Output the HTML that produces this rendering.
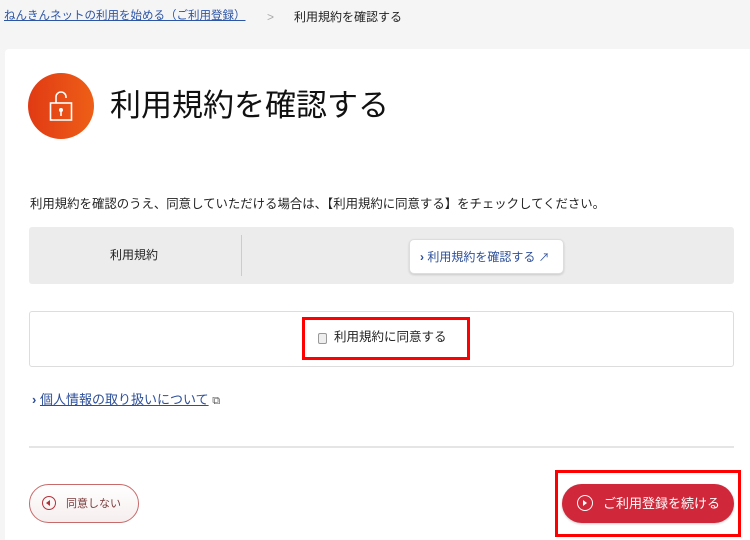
<!DOCTYPE html>
<html><head><meta charset="utf-8"><style>
*{margin:0;padding:0;box-sizing:border-box}
body{width:750px;height:540px;background:#f5f5f5;font-family:"Liberation Sans","Noto Sans CJK JP",sans-serif;position:relative;overflow:hidden;color:#222}
.a{position:absolute;line-height:1.2}
</style></head><body>
<div class="a" style="left:4px;top:10px;font-size:11.5px;color:#2d55a6;text-decoration:underline">ねんきんネットの利用を始める（ご利用登録）</div>
<div class="a" style="left:267px;top:10px;font-size:12px;color:#aaa">&gt;</div>
<div class="a" style="left:294px;top:10px;font-size:12px;color:#222">利用規約を確認する</div>
<div class="a" style="left:5px;top:49px;width:745px;height:491px;background:#fff;border-radius:4px 0 0 0"></div>
<div class="a" style="left:28px;top:73px;width:66px;height:66px;border-radius:50%;background:linear-gradient(90deg,#e13a14,#ee5f17)"></div>
<svg class="a" style="left:48px;top:88px" width="26" height="34" viewBox="0 0 26 34"><path d="M8 15V9a5 5 0 0 1 10 0v1" fill="none" stroke="#fff" stroke-width="1.6"/><rect x="2.5" y="15" width="21" height="17" fill="none" stroke="#fff" stroke-width="1.6"/><circle cx="13" cy="22" r="2" fill="#fff"/><path d="M13 23v5" stroke="#fff" stroke-width="1.6"/></svg>
<div class="a" style="left:110px;top:87px;font-size:31px;color:#111">利用規約を確認する</div>
<div class="a" style="left:30px;top:197px;font-size:12.4px">利用規約を確認のうえ、同意していただける場合は、【利用規約に同意する】をチェックしてください。</div>
<div class="a" style="left:29px;top:227px;width:705px;height:57px;background:#ececec;border-radius:3px"></div>
<div class="a" style="left:110px;top:248px;font-size:12px">利用規約</div>
<div class="a" style="left:241px;top:235px;width:1px;height:41px;background:#ccc"></div>
<div class="a" style="left:409px;top:239px;width:155px;height:35px;background:#fff;border:1px solid #ddd;border-radius:5px;box-shadow:0 1px 2px rgba(0,0,0,.15);font-size:12px;color:#2d4f9a;padding:10px 0 0 10px;line-height:1.2"><b style="color:#2d4f9a">›</b>&nbsp;利用規約を確認する <span style="font-size:11px">↗</span></div>
<div class="a" style="left:29px;top:311px;width:705px;height:56px;border:1px solid #ddd;border-radius:3px"></div>
<div class="a" style="left:302px;top:317px;width:168px;height:43px;border:3px solid #f00"></div>
<div class="a" style="left:318px;top:333px;width:9px;height:11px;border:1px solid #999;border-radius:2px;background:#eee"></div>
<div class="a" style="left:334px;top:330px;font-size:12.5px">利用規約に同意する</div>
<div class="a" style="left:32px;top:392px;font-size:13px;color:#2d4f9a"><b>›</b> <span style="text-decoration:underline">個人情報の取り扱いについて</span> <span style="font-size:11px;color:#555">⧉</span></div>
<div class="a" style="left:29px;top:446px;width:705px;height:2px;background:#e5e5e5"></div>
<div class="a" style="left:29px;top:484px;width:110px;height:39px;border:1px solid #c96a6a;border-radius:20px;background:linear-gradient(#fff,#f6eeee)"></div>
<div class="a" style="left:42px;top:496px;width:14px;height:14px;border:1.5px solid #b3303a;border-radius:50%"></div>
<div class="a" style="left:46px;top:500px;width:0;height:0;border-top:3px solid transparent;border-bottom:3px solid transparent;border-right:4px solid #b3303a"></div>
<div class="a" style="left:66px;top:498px;font-size:11px;color:#7a3a3a">同意しない</div>
<div class="a" style="left:555px;top:470px;width:186px;height:67px;border:3px solid #f00"></div>
<div class="a" style="left:562px;top:484px;width:172px;height:39px;border-radius:20px;background:#d0283a;box-shadow:0 1px 2px rgba(0,0,0,.2)"></div>
<div class="a" style="left:577px;top:495px;width:16px;height:16px;border:1.5px solid #fff;border-radius:50%"></div>
<div class="a" style="left:583px;top:500px;width:0;height:0;border-top:3px solid transparent;border-bottom:3px solid transparent;border-left:4px solid #fff"></div>
<div class="a" style="left:603px;top:496px;font-size:13px;color:#fff">ご利用登録を続ける</div>
</body></html>
